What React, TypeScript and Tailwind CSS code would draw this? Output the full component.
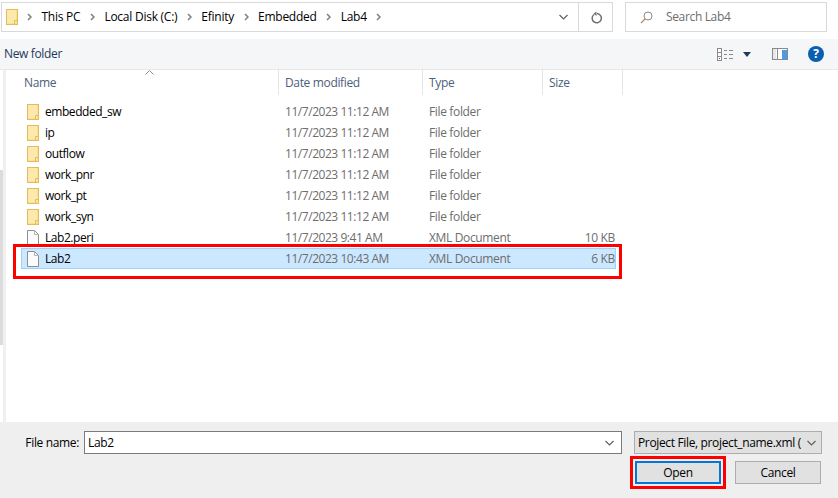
import React from 'react';

const rows = [
  { name: 'embedded_sw', date: '11/7/2023 11:12 AM', type: 'File folder', size: '', kind: 'folder' },
  { name: 'ip', date: '11/7/2023 11:12 AM', type: 'File folder', size: '', kind: 'folder' },
  { name: 'outflow', date: '11/7/2023 11:12 AM', type: 'File folder', size: '', kind: 'folder' },
  { name: 'work_pnr', date: '11/7/2023 11:12 AM', type: 'File folder', size: '', kind: 'folder' },
  { name: 'work_pt', date: '11/7/2023 11:12 AM', type: 'File folder', size: '', kind: 'folder' },
  { name: 'work_syn', date: '11/7/2023 11:12 AM', type: 'File folder', size: '', kind: 'folder' },
  { name: 'Lab2.peri', date: '11/7/2023 9:41 AM', type: 'XML Document', size: '10 KB', kind: 'file' },
  { name: 'Lab2', date: '11/7/2023 10:43 AM', type: 'XML Document', size: '6 KB', kind: 'file', selected: true },
];

const crumbs = ['This PC', 'Local Disk (C:)', 'Efinity', 'Embedded', 'Lab4'];

function FolderIcon() {
  return (
    <svg width="12" height="16" viewBox="0 0 12 16" className="shrink-0">
      <rect x="0.5" y="0.5" width="11" height="15" fill="#fbe08f" stroke="#e3bd5c" />
      <rect x="1" y="1" width="9" height="13" fill="#fde9ab" />
      <path d="M8.5 15.5v-4h3" fill="none" stroke="#e3bd5c" />
    </svg>
  );
}

function FileIcon() {
  return (
    <svg width="12" height="16" viewBox="0 0 12 16" className="shrink-0">
      <path d="M0.5 0.5h7l4 4v11h-11z" fill="#fbfbfb" stroke="#8f8f8f" />
      <path d="M7.5 0.5v4h4" fill="none" stroke="#b5b5b5" />
    </svg>
  );
}

function Chevron() {
  return (
    <svg width="5" height="8" viewBox="0 0 5 8" className="shrink-0">
      <path d="M1 1l3 3-3 3" fill="none" stroke="#7f7f7f" strokeWidth="1.5" />
    </svg>
  );
}

function DownChevron({ color = '#6b6b6b' }: { color?: string }) {
  return (
    <svg width="9" height="6" viewBox="0 0 9 6" className="shrink-0">
      <path d="M0.5 1l4 4 4-4" fill="none" stroke={color} strokeWidth="1.2" />
    </svg>
  );
}

function ViewIcon() {
  return (
    <svg width="16" height="13" viewBox="0 0 16 13">
      <rect x="0.5" y="0.5" width="4" height="12" fill="#fff" stroke="#8a8a8a" />
      <path d="M0.5 4.5h4M0.5 8.5h4" stroke="#8a8a8a" />
      <rect x="2" y="10" width="1" height="1" fill="#c0392b" />
      <path d="M7 2.5h3M12 2.5h4M7 6.5h3M12 6.5h4M7 10.5h3M12 10.5h4" stroke="#8a8a8a" />
    </svg>
  );
}

function PaneIcon() {
  return (
    <svg width="16" height="12" viewBox="0 0 16 12">
      <rect x="0.5" y="0.5" width="15" height="11" fill="#fff" stroke="#8a8a8a" />
      <rect x="1" y="1" width="3" height="10" fill="#e8e8e8" />
      <rect x="5" y="1" width="1" height="10" fill="#8a8a8a" />
      <rect x="10" y="2" width="5" height="9" fill="#4a9be8" />
    </svg>
  );
}

function HeaderCell({ label, className }: { label: string; className: string }) {
  return (
    <div className={`h-[25px] pt-px border-r border-[#e5e5e5] flex items-center ${className}`}>
      <span>{label}</span>
    </div>
  );
}

export default function App() {
  return (
    <div
      className="relative w-[838px] h-[498px] overflow-hidden bg-white flex flex-col text-[12px] text-black tracking-[-0.35px]"
      style={{ fontFamily: '"Open Sans", "Noto Sans", sans-serif' }}
    >
      {/* address row */}
      <div className="h-[39px] pt-[2px] pl-[1px] flex items-start shrink-0">
        <div className="w-[612px] h-[30px] border border-[#d9d9d9] flex items-center pl-[4px]">
          <FolderIcon />
          <div className="flex items-center ml-[9px] gap-[9.5px] tracking-[-0.25px]">
            {crumbs.map(c => (
              <React.Fragment key={c}>
                <Chevron />
                <span className="whitespace-nowrap">{c}</span>
              </React.Fragment>
            ))}
            <Chevron />
          </div>
          <div className="ml-auto flex items-center h-full">
            <DownChevron color="#606060" />
            <div className="ml-[10px] w-px h-full bg-[#d9d9d9]" />
            <svg width="12" height="13" viewBox="0 0 12 13" className="ml-[12px] mr-[9px]">
              <path d="M3 3.5A4.6 4.6 0 1 0 6 2.6" fill="none" stroke="#6f6f6f" strokeWidth="1.5" />
              <path d="M5.5 0.5v4.5l-3-2.2z" fill="#6f6f6f" />
            </svg>
          </div>
        </div>
        <div className="ml-[12px] w-[202px] h-[30px] border border-[#d9d9d9] flex items-center pl-[14px] text-[#6d6d6d]">
          <svg width="13" height="13" viewBox="0 0 13 13">
            <circle cx="8" cy="5" r="4" fill="none" stroke="#8a8a8a" />
            <path d="M5 8l-4 4" stroke="#b98a6a" strokeWidth="1.2" />
          </svg>
          <span className="ml-[13px]">Search Lab4</span>
        </div>
      </div>

      {/* toolbar */}
      <div className="h-[31px] bg-[#f5f6f7] border-b border-[#e8e8e8] flex items-center pl-[4px] shrink-0">
        <span className="text-[#1e395b]">New folder</span>
        <div className="ml-auto flex items-center pr-[14px]">
          <ViewIcon />
          <svg width="8" height="5" viewBox="0 0 8 5" className="ml-[10px]">
            <path d="M0 0h8L4 5z" fill="#1e395b" />
          </svg>
          <div className="ml-[21px]"><PaneIcon /></div>
          <div className="ml-[20px] w-[16px] h-[16px] rounded-full bg-[#0c5fb0] text-white font-bold text-[12px] leading-[16px] text-center">?</div>
        </div>
      </div>

      {/* list */}
      <div className="flex-1 min-h-0 flex">
        <div className="w-[6px] shrink-0 flex">
          <div className="w-[3px] mt-[100px] h-[175px] bg-[#dcdcdc]" />
          <div className="w-[3px] bg-[#f0f0f0]" />
        </div>
        <div className="flex-1 min-w-0">
          <div className="flex text-[#4c607a]">
            <div className="relative w-[273px] pl-[18px]">
              <HeaderCell label="Name" className="" />
              <svg width="9" height="5" viewBox="0 0 9 5" className="absolute left-[139px] top-0">
                <path d="M0.5 4.5l4-4 4 4" fill="none" stroke="#8a8a8a" />
              </svg>
            </div>
            <HeaderCell label="Date modified" className="w-[144px] pl-[6px]" />
            <HeaderCell label="Type" className="w-[120px] pl-[6px]" />
            <HeaderCell label="Size" className="w-[80px] pl-[6px]" />
          </div>
          <div className="pt-[6px] pl-[15px] w-[610px]">
            {rows.map(r => (
              <div
                key={r.name}
                className={`h-[21px] pt-px flex items-center border ${r.selected ? 'bg-[#cce8ff] border-[#99d1ff]' : 'border-transparent'}`}
              >
                <div className="w-[263px] flex items-center pl-[5px]">
                  {r.kind === 'folder' ? <FolderIcon /> : <FileIcon />}
                  <span className="ml-[6px] tracking-[-0.45px]">{r.name}</span>
                </div>
                <span className="w-[144px] text-[#6d6d6d] tracking-[-0.45px]">{r.date}</span>
                <span className="w-[120px] text-[#6d6d6d]">{r.type}</span>
                <span className="w-[66px] text-right text-[#6d6d6d]">{r.size}</span>
              </div>
            ))}
          </div>
        </div>
      </div>

      {/* bottom panel */}
      <div className="h-[76px] bg-[#efefef] shrink-0 pt-[9px] relative">
        <div className="flex items-center h-[23px]">
          <span className="w-[79px] text-right">File name:</span>
          <div className="ml-[5px] w-[538px] h-[23px] bg-white border border-[#7a7a7a] flex items-center pl-[3px] pr-[7px]">
            <span>Lab2</span>
            <div className="ml-auto"><DownChevron color="#606060" /></div>
          </div>
          <div className="ml-[12px] w-[188px] h-[23px] bg-[#e1e1e1] border border-[#adadad] flex items-center pl-[3px] pr-[5px]">
            <span className="whitespace-nowrap flex-1">Project File, project_name.xml (</span>
            <div className="ml-[4px]"><DownChevron color="#606060" /></div>
          </div>
        </div>
        <div className="flex mt-[7px] pl-[635px] gap-[14px]">
          <button className="w-[86px] h-[23px] bg-[#e1e1e1] border-2 border-[#0078d7]">Open</button>
          <button className="w-[86px] h-[23px] bg-[#e1e1e1] border border-[#adadad]">Cancel</button>
        </div>
      </div>

      {/* red annotation boxes */}
      <div className="absolute left-[13px] top-[244px] w-[609px] h-[35px] border-[3px] border-[#ff0000] pointer-events-none" />
      <div className="absolute left-[630px] top-[456px] w-[96px] h-[33px] border-[3px] border-[#ff0000] pointer-events-none" />
    </div>
  );
}
